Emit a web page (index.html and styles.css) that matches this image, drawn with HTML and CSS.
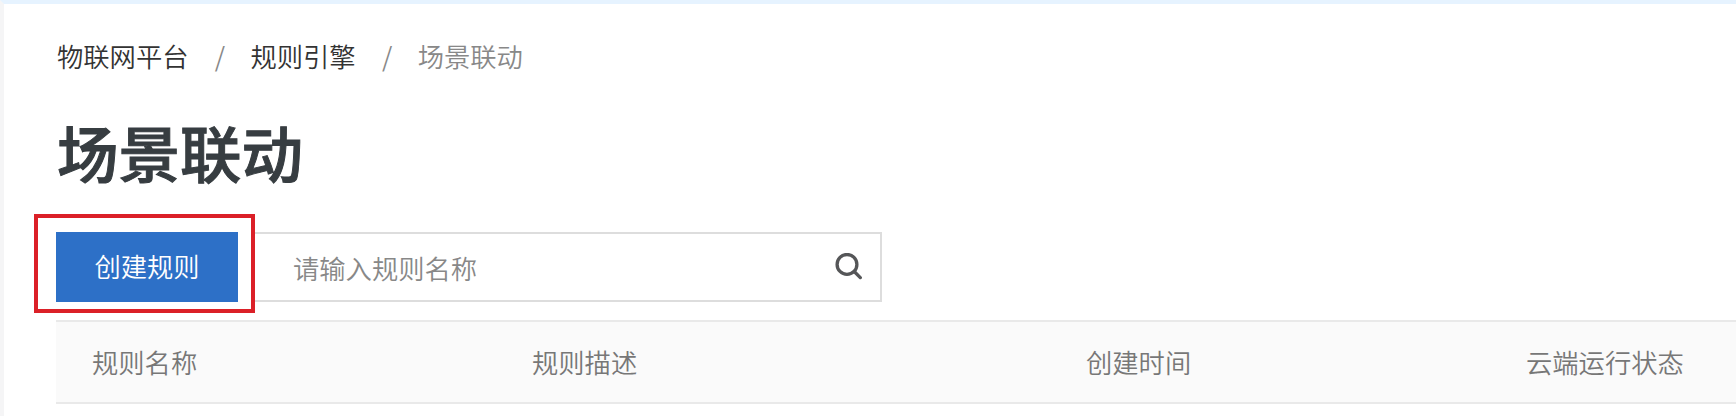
FILE: index.html
```html
<!DOCTYPE html>
<html lang="zh-CN">
<head>
<meta charset="utf-8">
<title>场景联动</title>
<link rel="stylesheet" href="styles.css">
</head>
<body>
<main class="page">
  <nav class="breadcrumb">
    <a class="crumb">物联网平台</a><span class="separator">/</span><a class="crumb">规则引擎</a><span class="separator">/</span><span class="current">场景联动</span>
  </nav>
  <h1 class="title">场景联动</h1>
  <div class="toolbar">
    <div class="create-wrap"><button class="create">创建规则</button></div>
    <div class="search">
      <span class="placeholder">请输入规则名称</span>
      <svg class="search-icon" viewBox="0 0 28 28"><circle cx="13" cy="11.4" r="9.9"/><path d="M20.2 18.5l6.1 6.1"/></svg>
    </div>
  </div>
  <div class="table-head">
    <span>规则名称</span><span>规则描述</span><span>创建时间</span><span>云端运行状态</span>
  </div>
</main>
</body>
</html>
```
FILE: styles.css
```css
* { box-sizing: border-box; }
body { margin: 0; background: #fff; font-family: "Noto Sans CJK SC DemiLight", "Noto Sans CJK SC", sans-serif; font-weight: 350; overflow: hidden; }
.page { height: 416px; border-top: 4px solid #e6f3ff; border-left: 4px solid #f5f5f6; padding-left: 52px; }
.breadcrumb { display: flex; height: 106px; padding: 32px 0 0 1px; font-size: 26.3px; line-height: 40px; color: #333; }
.separator { width: 62px; padding-left: 1px; text-align: center; color: #888; }
.current { color: #888; }
.title { margin: 0; height: 104px; padding-left: 1px; font-family: "Noto Sans CJK SC", sans-serif; font-size: 61.5px; line-height: 84px; font-weight: 500; color: #373d41; -webkit-text-stroke: 1px #373d41; }
.toolbar { display: flex; height: 107px; margin-left: -22px; }
.create-wrap { width: 221px; height: 99px; border: 4px solid #db2028; padding: 14px 0 0 18px; }
.create { display: block; width: 182px; height: 70px; border: 0; padding: 0 0 3px; background: #2d70c7; color: #fff; font: inherit; font-size: 26.3px; }
.search { display: flex; width: 627px; height: 70px; margin-top: 18px; border: 2px solid #ddd; border-left: 0; padding: 0 18px 0 38px; align-items: center; justify-content: space-between; font-size: 26.3px; color: #888; }
.search-icon { width: 28px; height: 28px; fill: none; stroke: #555658; stroke-width: 3.3; stroke-linecap: round; }
.table-head { display: grid; grid-template-columns: 440px 554px 440px 1fr; height: 84px; margin-top: -1px; border-top: 2px solid #e9e9e9; border-bottom: 2px solid #e9e9e9; background: #fafafa; padding-left: 36px; font-size: 26.3px; line-height: 80px; color: #777; }
```
